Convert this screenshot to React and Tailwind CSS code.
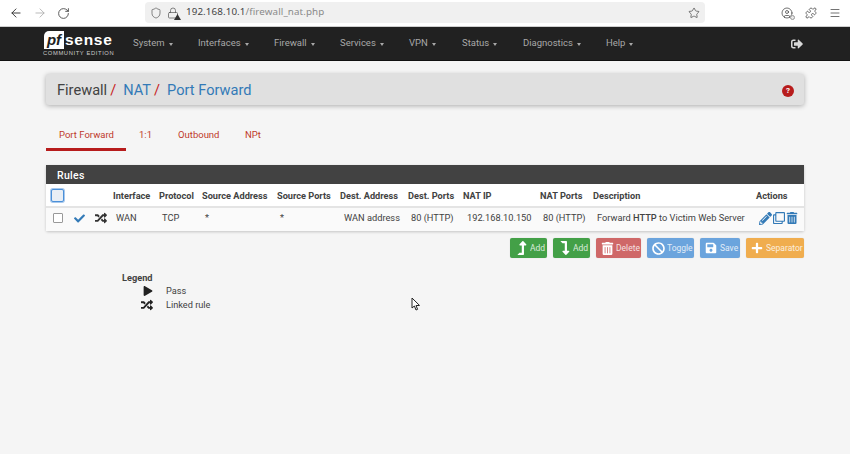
import React from "react";
import { ArrowLeft, ArrowRight, RotateCw, Shield, Lock, Star, CircleUser, Puzzle, Menu } from "lucide-react";
import { FaLevelUpAlt, FaLevelDownAlt, FaTrashAlt, FaBan, FaSave, FaPlus, FaCheck, FaRandom, FaSignOutAlt, FaPlay, FaPencilAlt, FaRegClone } from "react-icons/fa";

const nav = [
  ["System", "w-[65px]"],
  ["Interfaces", "w-[76px]"],
  ["Firewall", "w-[66px]"],
  ["Services", "w-[69px]"],
  ["VPN", "w-[53px]"],
  ["Status", "w-[61px]"],
  ["Diagnostics", "w-[83px]"],
  ["Help", "w-[50px]"],
];
const cols = "grid grid-cols-[67px_46px_43px_75px_63px_68px_55px_77px_53px_163px_48px]";
const heads = ["Interface", "Protocol", "Source Address", "Source Ports", "Dest. Address", "Dest. Ports", "NAT IP", "NAT Ports", "Description", "Actions"];
const cells = ["WAN", "TCP", "*", "*", "WAN address", "80 (HTTP)", "192.168.10.150", "80 (HTTP)", "Forward HTTP to Victim Web Server"];

function Btn({ bg, w, icon, label }) {
  return (
    <div className={`${bg} ${w} h-[20px] rounded-[2px] flex items-center pl-[5px] text-white text-[8.5px] shadow-[0_0_1px_rgba(0,0,0,0.2)]`}>
      <span className="w-[15px] shrink-0 flex items-center">{icon}</span>
      <span className="opacity-80 whitespace-nowrap">{label}</span>
    </div>
  );
}

export default function App() {
  return (
    <div className="relative w-[850px] h-[454px] overflow-hidden bg-[#f5f5f5] font-['Roboto',sans-serif]">
      {/* browser bar */}
      <div className="h-[27px] bg-white border-b border-b-[#cfcfcf] flex items-center text-[#444]">
        <div className="flex items-center gap-[10px] pl-[9px] w-[145px]">
          <ArrowLeft size={14} strokeWidth={1.6} color="#333" />
          <ArrowRight size={14} strokeWidth={1.4} color="#aaa" />
          <RotateCw size={13} strokeWidth={1.6} color="#444" />
        </div>
        <div className="w-[560px] h-[21px] mb-[1px] bg-[#f0f0f0] rounded-[4px] flex items-center pl-[5px] pr-[4px]">
          <Shield size={12} strokeWidth={1.4} color="#555" />
          <span className="relative ml-[5px] w-[12px] h-[12px]">
            <Lock size={12} strokeWidth={1.4} color="#555" />
            <svg className="absolute right-[-2px] bottom-[-1px]" width="7" height="6" viewBox="0 0 7 6"><path d="M3.5 0 L7 6 L0 6 Z" fill="#333" /></svg>
          </span>
          <span className="ml-[7px] text-[9.8px] font-['Noto_Sans',sans-serif] text-[#8a8a8a] tracking-[0.1px]"><span className="text-[#444]">192.168.10.1</span>/firewall_nat.php</span>
          <Star size={12} strokeWidth={1.4} color="#444" className="ml-auto mr-[1px]" />
        </div>
        <div className="flex items-center gap-[12px] ml-[76px]">
          <span className="relative w-[12px] h-[12px]">
            <CircleUser size={12} strokeWidth={1.5} color="#444" />
            <span className="absolute right-[-2px] bottom-[-1px] w-[5px] h-[5px] rounded-full bg-[#e8e8e8] border border-[#999]" />
          </span>
          <Puzzle size={12} strokeWidth={1.5} color="#444" />
          <Menu size={12} strokeWidth={1.5} color="#444" />
        </div>
      </div>
      {/* navbar */}
      <div className="h-[34px] bg-[#212121] border-b border-b-[#111] flex items-center pl-[43px]">
        <div className="w-[90px] h-[30px] flex flex-col justify-center leading-none font-['Liberation_Sans',sans-serif]">
          <div className="flex items-center h-[18px] ml-[1px]">
            <span className="bg-white text-[#212121] w-[20px] h-[18px] rounded-tl-[5px] flex items-center justify-center text-[15px] font-bold italic leading-none">pf</span>
            <span className="text-white text-[15.5px] font-bold leading-none ml-[1px] tracking-[0.7px]">sense</span>
          </div>
          <span className="text-[#c8c8c8] text-[5.8px] tracking-[0.62px] mt-[2px] whitespace-nowrap">COMMUNITY EDITION</span>
        </div>
        {nav.map(([t, w]) => (
          <div key={t} className={`${w} flex items-center text-[9.5px] text-[#a8a8a8]`}>
            <span>{t}</span>
            <span className="ml-[4px] mt-[1px] border-x-[2.5px] border-x-transparent border-t-[3px] border-t-[#a8a8a8]" />
          </div>
        ))}
        <FaSignOutAlt size={12} color="#d8d8d8" className="ml-[135px]" />
      </div>
      {/* content */}
      <div className="w-[758px] ml-[46px] pt-[13px]">
        <div className="h-[31px] bg-[#e0e0e0] rounded-[3px] shadow-[0_1px_5px_rgba(0,0,0,0.3)] flex items-center px-[11px] pt-[2px] text-[14.6px] text-[#424242]">
          <span>Firewall</span>
          <span className="text-[#c71c22] ml-[3px]">/</span>
          <span className="text-[#337ab7] ml-[7px]">NAT</span>
          <span className="text-[#c71c22] ml-[3px]">/</span>
          <span className="text-[#337ab7] ml-[7px]">Port Forward</span>
          <span className="ml-auto mr-[-1px] w-[12px] h-[12px] rounded-full bg-[#b71c1c] text-white text-[8px] font-bold flex items-center justify-center">?</span>
        </div>
        {/* tabs */}
        <div className="flex mt-[20px] text-[9.5px] text-[#c0392b] h-[26px]">
          <div className="w-[80px] border-b-[3px] border-b-[#b71c1c] pl-[13px] pt-[3px] h-[26px]">Port Forward</div>
          <div className="ml-[13px] w-[39px] pt-[3px]">1:1</div>
          <div className="w-[67px] pt-[3px]">Outbound</div>
          <div className="pt-[3px]">NPt</div>
        </div>
        {/* panel */}
        <div className="mt-[14px] bg-white shadow-[0_1px_3px_rgba(0,0,0,0.2)] rounded-b-[2px]">
          <div className="h-[19px] pt-[2px] bg-[#424242] text-white text-[10.5px] font-medium tracking-[0.3px] flex items-center pl-[11px]">Rules</div>
          <div className={`${cols} h-[24px] pt-[1px] items-center text-[9.2px] font-bold text-[#424242] border-b-2 border-b-[#e4e4e4]`}>
            <div className="col-start-1 flex pl-[5px]">
              <span className="w-[13px] h-[13px] rounded-[2px] bg-[#e8eef5] border-[1.5px] border-[#4a90d9] ring-1 ring-[#a8c8ec]" />
            </div>
            {heads.map((h) => <div key={h} className="whitespace-nowrap">{h}</div>)}
          </div>
          <div className={`${cols} h-[23px] pb-[3px] items-center text-[9.25px] text-[#424242] bg-[#fafafa]`}>
            <div className="flex items-center pl-[7px]">
              <span className="w-[10px] h-[10px] border border-[#999] rounded-[1px] bg-white" />
              <FaCheck size={11} color="#337ab7" className="ml-[11px]" />
              <FaRandom size={12} color="#333" className="ml-[10px]" />
            </div>
            {cells.map((c, i) => (
              <div key={i} className={`whitespace-nowrap ${i === 4 || i === 6 || i === 8 ? "pl-[4px]" : "pl-[3px]"}`}>
                {i === 8 ? <>Forward <span className="font-medium">HTTP</span> to Victim Web Server</> : c}
              </div>
            ))}
            <div className="flex items-center text-[#337ab7] gap-[1px] ml-[3px]">
              <FaPencilAlt size={13} />
              <FaRegClone size={12} />
              <FaTrashAlt size={12} />
            </div>
          </div>
        </div>
        {/* buttons */}
        <div className="flex justify-end gap-[6px] mt-[7px]">
          <Btn bg="bg-[#43a047]" w="w-[37px]" icon={<FaLevelUpAlt size={14} />} label="Add" />
          <Btn bg="bg-[#43a047]" w="w-[37px]" icon={<FaLevelDownAlt size={14} />} label="Add" />
          <Btn bg="bg-[#cf6868]" w="w-[45px]" icon={<FaTrashAlt size={13} />} label="Delete" />
          <Btn bg="bg-[#6ba4dd]" w="w-[47px]" icon={<FaBan size={13} />} label="Toggle" />
          <Btn bg="bg-[#6ba4dd]" w="w-[40px]" icon={<FaSave size={12} />} label="Save" />
          <Btn bg="bg-[#f0ad4e]" w="w-[58px]" icon={<FaPlus size={12} />} label="Separator" />
        </div>
        {/* legend */}
        <div className="mt-[13px] ml-[76px] text-[9.2px] text-[#424242]">
          <div className="font-bold h-[13px] leading-[13px]">Legend</div>
          <div className="flex items-center h-[14px] mt-[0px]">
            <span className="w-[44px] flex justify-end pr-[13px]"><FaPlay size={10} color="#212121" /></span>
            <span>Pass</span>
          </div>
          <div className="flex items-center h-[14px]">
            <span className="w-[44px] flex justify-end pr-[13px]"><FaRandom size={12} color="#212121" /></span>
            <span>Linked rule</span>
          </div>
        </div>
      </div>
      {/* mouse pointer */}
      <svg className="absolute left-[411px] top-[297px]" width="10" height="15" viewBox="0 0 10 15">
        <path d="M1 1 L1 11 L3.4 9 L5 13 L6.6 12.3 L5 8.6 L8.5 8.4 Z" fill="#fff" stroke="#222" strokeWidth="1" />
      </svg>
    </div>
  );
}
